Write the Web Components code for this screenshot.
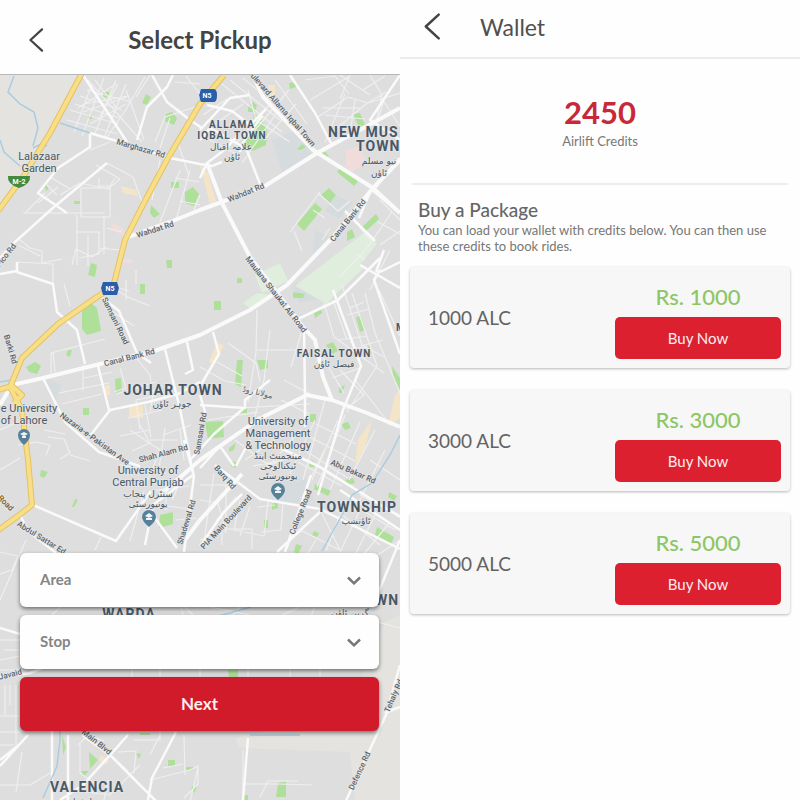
<!DOCTYPE html>
<html lang="en">
<head>
<meta charset="utf-8">
<meta name="viewport" content="width=device-width, initial-scale=1">
<title>Airlift</title>
<style>
body{margin:0;font-family:Lato,"Liberation Sans",sans-serif;color:#5c5c5c;background:#fff}
</style>
</head>
<body>
<app-screens>
  <pickup-screen slot="left"></pickup-screen>
  <wallet-screen slot="right"></wallet-screen>
</app-screens>

<template id="t-screens">
<style>
:host{display:grid;grid-template-columns:minmax(0,1fr) minmax(0,1fr);min-height:100vh}
::slotted(*){min-width:0}
</style>
<slot name="left"></slot><slot name="right"></slot>
</template>

<template id="t-bar">
<style>
:host{display:block;background:#fefefe}
header{display:grid;grid-template-columns:40px 1fr 40px;align-items:center;box-sizing:border-box;height:75px;padding:6px 16px 0;border-bottom:1px solid #b4b6b8}
h1{margin:0;text-align:center;font-size:24px;line-height:30px;font-weight:700;color:#434343}
button{display:grid;place-items:center;width:40px;height:40px;padding:0;border:0;background:none;color:#444;cursor:pointer}
svg{width:18px;height:26px}
:host([compact]) header{grid-template-columns:64px 1fr;height:59px;padding:0 16px 4px;border-bottom:2px solid #ececec}
:host([compact]) h1{text-align:left;font-size:23px;font-weight:400;color:#505050}
:host([compact]) button{width:32px}
:host([compact]) svg{width:20px;height:29px}
</style>
<header>
<button type="button" aria-label="Back"><svg viewBox="0 0 18 28" fill="none" stroke="currentColor" stroke-width="2.400"><path d="M15.500 2.500L3 14L15.500 25.500" stroke-linecap="round" stroke-linejoin="round"/></svg></button>
<h1><slot></slot></h1>
</header>
</template>

<template id="t-button">
<style>
:host{display:block}
button{display:block;box-sizing:border-box;width:100%;height:42px;border:0;border-radius:5px;background:#dc2030;color:#fdeeee;font:400 15px/20px Lato,"Liberation Sans",sans-serif;cursor:pointer}
:host([large]) button{height:54px;border-radius:6px;background:#d11a2a;font-size:17px;font-weight:700;box-shadow:0 2px 4px rgba(0,0,0,.5)}
</style>
<button type="button"><slot></slot></button>
</template>

<template id="t-select">
<style>
:host{display:grid;align-items:center;height:54px;background:#fefefe;border-radius:6px;box-shadow:0 2px 4px rgba(0,0,0,.5)}
select,svg{grid-area:1/1}
select{appearance:none;width:100%;height:54px;margin:0;padding:0 56px 2px 20px;border:0;border-radius:6px;background:none;color:#858585;font:700 15px/20px Lato,"Liberation Sans",sans-serif}
svg{justify-self:end;width:14px;height:9px;margin-right:18px;pointer-events:none}
</style>
<select><option></option></select>
<svg viewBox="0 0 14 9" fill="none" stroke="#777" stroke-width="2.500"><path d="M1 1.500L7 7.300L13 1.500"/></svg>
</template>

<template id="t-pickup">
<style>
:host{display:flex;flex-direction:column}
main{flex:1;display:grid;position:relative}
city-map{position:absolute;inset:0}
form{position:relative;align-self:end;display:grid;gap:8px;padding:0 21px 69px 20px}
</style>
<title-bar>Select Pickup</title-bar>
<main>
<city-map></city-map>
<form>
<select-field label="Area"></select-field>
<select-field label="Stop"></select-field>
<action-button large>Next</action-button>
</form>
</main>
</template>

<template id="t-wallet">
<style>
:host{display:block;background:#fefefe}
.balance{display:flex;flex-direction:column;align-items:center;margin:0 12px;padding:33px 0;border-bottom:2px solid #ededed}
.balance strong{font-size:31px;line-height:40px;font-weight:700;color:#c7283a}
.balance span{font-size:13px;line-height:18px;color:#777}
.intro{padding:13px 18px 13px}
h2{margin:0;font-size:19px;line-height:24px;font-weight:500;color:#666}
p{margin:0;font-size:13px;line-height:16px;color:#777}
.list{display:grid;gap:22px;padding:0 10px}
</style>
<title-bar compact>Wallet</title-bar>
<main>
<section class="balance"><strong>2450</strong><span>Airlift Credits</span></section>
<section class="intro"><h2>Buy a Package</h2><p>You can load your wallet with credits below. You can then use these credits to book rides.</p></section>
<section class="list">
<package-card><span slot="name">1000 ALC</span><span slot="price">Rs. 1000</span></package-card>
<package-card><span slot="name">3000 ALC</span><span slot="price">Rs. 3000</span></package-card>
<package-card><span slot="name">5000 ALC</span><span slot="price">Rs. 5000</span></package-card>
</section>
</main>
</template>

<template id="t-card">
<style>
:host{display:grid;grid-template-columns:1fr 166px;align-items:center;padding:15px 9px 9px 18px;background:#f7f7f7;border-radius:4px;box-shadow:0 1px 3px rgba(0,0,0,.28)}
.name{margin-bottom:6px;font-size:19px;line-height:24px;color:#636363}
.price{margin-bottom:6px;text-align:center;font-size:22px;line-height:29px;font-weight:500;color:#8cc665}
</style>
<div class="name"><slot name="name"></slot></div>
<div><div class="price"><slot name="price"></slot></div><action-button>Buy Now</action-button></div>
</template>

<template id="t-map">
<style>
:host{display:block;overflow:hidden;background:#dedede}
svg{display:block;width:100%;height:100%}
.w{fill:none;stroke:#fafafa;stroke-linejoin:round}
.a{stroke-width:4}.b{stroke-width:2.500}.c{stroke-width:1.200;stroke:#efefef}
.g{fill:#aee09a}.pale{fill:#e0eedd}.sand{fill:#f5e5c8}.pink{fill:#f0dcda}.mist{fill:#d6dbde}
.river{fill:none;stroke:#a9cde0;stroke-width:1.500}
.edge{fill:none;stroke:#e3c263;stroke-width:6;stroke-linejoin:round}.hwy{fill:none;stroke:#f9de88;stroke-width:4;stroke-linejoin:round}
text{font-family:Roboto,"DejaVu Sans",sans-serif;font-size:11px;fill:#4a5866;stroke:#e8e8e8;stroke-width:2px;stroke-opacity:.6;paint-order:stroke;text-anchor:middle}
.t{font-size:14px;font-weight:700;letter-spacing:1px}
.m{font-size:10px}
.left{text-anchor:start}
.r{font-size:8px;font-weight:500;fill:#59636c}
.u{font-family:"DejaVu Sans",sans-serif;font-size:9px}
.s{fill:#fff;stroke:none;font-size:7px;font-weight:700}
</style>
<svg viewBox="0 75 400 725" preserveAspectRatio="xMidYMin slice" role="img" aria-label="Map of Lahore">
<path fill="#e4e3df" d="M0 75H82L50 133L23 177L0 210Z"/>
<path fill="#e4e3df" d="M400 615L385 622L368 660L345 715L235 738L240 748L350 752L355 800H400Z"/>
<path class="mist" d="M272 140l24 -10 16 24 -30 18zM335 195l18 8 -14 16 -14 -8zM272 480l34-2 8 22-32 6zM315 230l14 6-16 18zM293 285l26 -8 4 20-24 6zM40 375l22 10-8 18z"/>
<g class="pale"><path d="M365 232l12 12 -50 60 -32 -18zM320 287l18-27 28 6 -30 28zM255 275l25 -12 8 18 -26 12zM243 303l14-10 14 2 -20 14z"/></g>
<g class="sand"><path d="M121 186l15 4 2 6-15-3zM268 85l7 0v12h-5zM200 165l8 8 8 28-6 3zM217 342l7 4-10 18-5-2zM129 406h14v12h-14zM395 395l5-5v28l-12 8zM372 420l-14 20-3 26 10-18zM105 385h5v10h-5zM101 755l8 6-3 4-7-5z"/></g>
<g class="pink"><path d="M111 222l12 6 2 8-13-6zM346 150l14-4 6 16-14 10-6-5zM122 259h10v4h-10z"/></g>
<path class="g" d="M253 113q10 6 14 18l-1 14-13 6-8-1-4-8 14-12zM248 108l5-6 4 3-2 7-7 0zM340 168l18 13-4 5-17-14zM321 195l8-7 7 7-7 9zM315 203l7 6-18 22-7-7zM376 214l3 5-14 13-3-5zM347 232l5-3 3 8-8 4zM146 94l5 3-4 8-5-2zM166 114l6-2 5 6-3 7-9-4zM185 192l8-5 6 7-5 12-9-3zM151 205l9 9-6 4-4-5zM171 182h8v6h-8zM289 83l7-1v5l-6 2zM302 144l4 3-5 3-4-1zM321 153l5-1 3 5-7-1zM353 114l7-1 5 12-6 2zM103 92h6v5h-6zM88 115h4v4h-4zM44 184l5 4-3 3zM74 201h6v3h-6zM82 307l9-4 6 5 4 23-14 4-5-6zM91 263l6 2-2 12-7-2zM140 284h5v10h-5zM166 260h6v8h-5zM26 367l9-5 6 4-4 8-8-2zM68 350l4 0-2 7-4-2zM115 379l6-1 1 13-6 2zM83 408h6v7h-6zM214 301h7v9h-7zM237 278h5v5h-5zM237 360h6l-2 27-6-3zM257 360l11 0v8l-8 2zM293 292l12 2-2 4-10 0zM314 313l7-4 1 4-7 5zM356 317l5-1 4 14-5 2zM326 345l7-3 5 9-6 3zM339 388l6-3-3 8-3 0zM205 422l18-1 1 16-16 2zM240 408h7v5h-7zM310 414l6 0v8h-6zM341 424l7-2 3 6-6 2zM315 484l16 7-3 5-14-7zM309 463l5-2 1 6-5 0zM377 527l17 10-3 7-16-9zM296 544l6 2-4 8-4-2zM314 531l5 2-2 4-5-2zM264 520h4v8h-4zM272 504l6-3 0 7-6 2zM229 448l7-5-2 7-5 2zM232 461l6 2-3 5-4-2zM41 470l7 2-4 6-4-2zM75 499l3 1-4 7-2 0zM160 515l13-3v12l-14 4zM389 492l8 4-3 5-6-4zM345 480l8-2 2 5-8 2zM168 760h7v6h-7zM89 752l9 8-8 9zM136 753l5 1-2 5zM186 767h7v3h-7zM278 783l8-2v16h-10zM228 670h10v7h-9zM62 735l4 12-3 8zM81 771h8l-5 5zM192 786l5 1-3 6-3-2zM242 795h6v5h-6zM140 733h10v2h-10zM392 366l8 12v12l-7-14zM367 345l3 1 3 8-3-1z"/>
<g class="w c">
<path d="M62 114l18-38M88 80l54 62M95 80l22 28M70 110l48 14M67 120l50 14M78 108l38-24M80 96l42 14M75 104l44 14M92 84l-18 48M104 78l-22 58M116 80l-22 56M126 84l-22 54M87 90l44 12M84 104l44-8M90 124l36-20M83 112l44-15M98 120l20-36M145 77l-20 34-18 26M126 90l18 50M150 75l-14 22"/>
<path d="M90 150l20-8M96 165l24 14-12 10-28-6-20 12M107 163l26 14 10 28M99 178v8l11 0v31H81V188M81 188h30M115 178l-6 10M25 213l20-20M23 213H105M50 177l20 12M47 185l10 10M38 203l20-16M77 215v50M77 232l22 0 0 22-20 4M104 216v38M88 236v30M107 228l14 4M99 248l20 2M20 240l10 8 12 3 0 12 20-4M18 245l22 11"/>
<path d="M160 160l-8 40M180 170l-20 52M177 140l12 36M155 142l10-25 30-10M170 118l-10 30M190 170l-14 50M175 178l24 4M200 205l-20-4M192 215l8-20M200 84l-25-2M186 76l14 18"/>
<path d="M203 115l24-16M215 124l28-20M222 84l60 48M230 80l50 40M243 78l48 40M210 140l30 16M235 145l36-42M248 90l8 30 34 22M275 80l32 44M282 105l-40 58M289 90l-34 40M296 104l-32 36M305 80l30-4 14 18M310 100l40-24M318 117l30-20 20 6 32-10M330 134l36-30 20-12M325 115l40 4M322 108l38 0M370 75l12 20-6 28M385 76l-22 14M380 96l20 30M340 75l30 20M345 94l-20 48M355 100l-6 40M384 100l-8 26M350 75l-10 24"/>
<path d="M290 232l30-40M302 251l-8-20M325 218l-12-8M318 193l20 18 12-10M330 228l-8 12M350 215l20 25M380 200l20 20M378 222l22 12M365 260l-8-6M392 212l-25 36-28 30M380 245l20-14M390 250l-20 40"/>
<path d="M72 265l4-16 16 8 14-10M64 284l6 22M53 284l0-20-36 -2M117 287l12 4M126 280v20M136 270v14M116 290l14 8 20 8M51 353l54-14M51 353v22M53 352l2 20M83 365v26M84 378l28-6M59 393l50-10M62 404l40-10M110 310l24 16M134 355l16 20 3 20M120 368l6 20-12 4M116 394l40-12M140 430l-4-30 20-4M145 405l6 32M128 418l34-8M120 436l30-6M150 412l4-22M163 435l28-10"/>
<path d="M257 310l-1 42-8 50M228 343l28 20 4 18M217 362l25 14M200 367l25 14 21 4M270 330l-6 50M257 350h50M265 376l-10 40M284 380l26 14M303 327l-12 40M324 303l10 34 50 36M333 300l14 40M342 285l20 60 22 12M350 308l14-6M338 340l30-4M347 315l22-6M314 343l30 50M338 350l30-3M361 346l22-6M340 370l24 25-18 14M355 380l30 38M365 293l10 40 25 60M379 290l21 46M332 378l28-10M352 293l25 73M377 366l-30 46M281 400l28 14M240 408l70-4M208 420l50-8"/>
<path d="M18 445l18-3 14 3-4 10M48 437l16 2 6 14-10 6M44 430l22 4M0 430l18-8M70 455l20 6M0 470l20 -12M110 450l18 16M130 430l30 20-12 30M140 425l10 18-18 8M150 440h28M165 428l-6 40M180 430l4 30M120 465l46 8M156 490l34-4M166 480v30M160 505l30 4M172 500l14-30M176 520l20-2M95 550l6-13M130 541l14-50"/>
<path d="M200 485l30 0M200 500l18 3 8 30M214 473l-10 68M226 478v50M236 497l-20 24M240 500l-6 30 30 6 4 -34M250 506l-10 30M222 545v-16h30v20M200 540l22-12M275 505l-18 2M283 502l-2 28-20 2M260 470l30-14M253 466l30-6M275 440l-30 20M235 440l40 30M300 430l-30 35M315 420l-28 60M325 400l-22 80M310 437l45 24M316 424l40 20M304 450l44 28M298 462l44 24M345 415l-28 72M360 422l-30 68M375 430l-26 50M385 450l-30 60M322 470l40 24M331 437l-24 48M338 420l-26 60M370 460l30 20M360 495l40 20M345 500l50 30M330 505l50 40M320 510l20 40M340 515l-14 36M300 530l40 20M305 510l-20 42M360 510l-20 42M375 515l-20 40M390 522l-26 32M400 540l-30 20M316 540l-10 16"/>
<path d="M0 552l18 4 -6 14-12 4M26 540l-26 60M0 640h20M4 650h16M0 660l20-4M5 685v30M16 685v60M0 716h22M0 732h20M0 745h14M10 685v20M22 670h-22"/>
<path d="M78 745l10-10 16 6M80 745v28l20 14M118 752l18-1-2 22M134 740h26v-10M184 735l1 40M150 780l40-10 8-4v18l-14 14M163 768l20-4M242 784h36l34 1M260 797l8-16h30M243 750v48M198 768l-8 34M120 745l-22 24M70 790l40 5M140 765l-30 30M0 785h30l20-12M22 752l-6 40M104 800l4-20M100 745l28 26M160 735l-10 20"/>
<path d="M60 607l-8 8M180 605l4 12M210 607l40 8M240 607l-12 14M300 607l-26 12M315 605l-4 12M185 607l10 10M132 669v8M160 669v8M200 669v8M248 669v8M290 669v8M320 669v8M370 620l30 8"/>
</g>
<g class="w b">
<path d="M90 133v14L58 168 38 193 67 213M90 133l30 9 50 16 30 6 12 2 10-4M137 140l10-33 20-20 6-12M152 75l15 27 23 18 12 8M83 75l44 67M107 163L54 207 15 242 0 258"/>
<path d="M0 274l17-3v-9M17 272l36 12 4 28 20 18 8 34M98 366l11 44M165 349l15 60 13 64M43 378l22 44 34 30 40 14 0 4M90 436l20-26 38-8M148 402l30-8 22-12M187 342l6 28-8 4M99 295l20 16 18 42 14 10"/>
<path d="M240 152l2 -8 20 -28M246 148l14 36M200 140l10-12 35 20M200 178l7-15 16-12 15-15M207 105l25 6 18 14 16-16M200 130l30-32 20-3"/>
<path d="M290 75l25 38 17 32M400 75l-30 45 30 20M345 211l30 30M372 190l28 23M371 190l-12 28M375 188l25-30M380 258l-20 20-22 22-42 20M360 265l40 23M380 270l-6 10 26 74M384 250l-8 22M400 262l-20 10"/>
<path d="M333 290l20 54 8 22-18 44-25 85M304 327l1 70v30M200 405l45 3 0 0 0-8 25-20M200 395l6 20M213 332l6 22-20 34M244 408l-30 26-24 26"/>
<path d="M33 505l83 36 35-50M193 475l-40 30-8 40M149 510l28 38M184 440l10 36-10 76M200 468l20-22 14 20M215 465l45 34 60 10 60 30 20 10M270 443l50 24 80 50M322 510l-45 42M311 475l-26 77M236 466l14-26M242 494l-18 18-24 34M340 490l60 40M20 515l8 16 28 22"/>
<path d="M0 628l20 6M0 677l30-4 20-8M52 730l0 70M68 735v65M128 735L83 785 60 800M28 735L0 766M82 735l28 20 50 50M176 732l-24 46-4 22M248 738l-5 62M112 757l30 30M0 760l20-16M400 540l-28 68M400 665l-14 50-42 90M385 713l15-6"/>
</g>
<g class="w a">
<path d="M0 405l12-20 31-7 57-14 57-14 43-15 50-25 37-25 46-48 40-49 27-28"/>
<path d="M128 237l42-15 30-12 65-24 52-33 52-28 31-17M253 75l10 22 50 53 60 38 27 25M207 163l15 40 28 54 53 70 12 13 8 37 9 23 35 13 33 14"/>
<path d="M332 400l-25-5-48 24-59 41-40 35M185 540l15-20 42-46"/>
</g>
<path class="river" d="M14 76l-6 16 12 12 14 8 4 16-5 18M0 140l4 12 16 14M33 148l8-4 6 2M60 123l30 10M400 435l-10 20-18 28-20 12-10 20-20 36M60 680v60l-3 26-14 32M215 617l36-10M250 735l50 0M0 382l12-2"/>
<path class="edge" d="M224 75L200 104 168 158 147 197 125 240 113 287 97 297 58 324 22 358 10 387 22 410 28 460 32 505 18 516-3 531M82 73L50 133 23 177-2 211M-2 390l14-4 10 9-8 8"/>
<path class="hwy" d="M224 75L200 104 168 158 147 197 125 240 113 287 97 297 58 324 22 358 10 387 22 410 28 460 32 505 18 516-3 531M82 73L50 133 23 177-2 211M-2 390l14-4 10 9-8 8"/>
<path fill="#2b5eaa" d="M201 89h13q3 0 3 6.500t-3 6.500h-13q-3-6 0-13zM199 95l3-6h11l4 6-4 7h-11zM103 282h14l2 6-2 7h-14l-2-7z"/>
<path fill="#43893e" d="M8 176h22q1 8-11 12q-12-4-11-12z"/>
<text class="s" x="207" y="98">N5</text><text class="s" x="110" y="291">N5</text><text class="s" x="19" y="184">M-2</text>
<path fill="#56819a" d="M24 445q-6-5-6-10a6 6 0 0 1 12 0q0 5-6 10zM149 527q-7-6-7-10a7 7 0 0 1 14 0q0 4-7 10zM278 500q-7-6-7-10a7 7 0 0 1 14 0q0 4-7 10z"/>
<path fill="#f0f4f6" d="M20 434l4-2 4 2-4 2zM22 436h4v2h-4zM145 516l4-3 4 3-4 2zM146 518h6v2h-6zM274 489l4-3 4 3-4 2zM275 491h6v2h-6z"/>
<text x="39" y="160">Lalazaar</text><text x="39" y="172">Garden</text>
<text class="t m" x="232" y="128">ALLAMA</text><text class="t m" x="232" y="139">IQBAL TOWN</text><text class="u" x="231" y="150">علامہ اقبال</text><text class="u" x="232" y="160">ٹاؤن</text>
<text class="t left" x="328" y="137">NEW MUS</text><text class="t left" x="356" y="151">TOWN</text><text class="u" x="379" y="164">نیو مسلم</text><text class="u" x="379" y="176">ٹاؤن</text>
<text class="t m" x="334" y="357">FAISAL TOWN</text><text class="u" x="334" y="367">فیصل ٹاؤن</text>
<text class="t" x="173" y="395">JOHAR TOWN</text><text class="u" x="172" y="407">جوہر ٹاؤن</text>
<text x="29" y="412">e University</text><text x="24" y="424">of Lahore</text>
<text x="278" y="425">University of</text><text x="278" y="437">Management</text><text x="278" y="449">&amp; Technology</text><text class="u" x="278" y="459">مینجمنٹ اینڈ</text><text class="u" x="278" y="469">ٹیکنالوجی</text><text class="u" x="278" y="479">یونیورسٹی</text>
<text x="148" y="474">University of</text><text x="148" y="486">Central Punjab</text><text class="u" x="148" y="497">سنٹرل پنجاب</text><text class="u" x="148" y="507">یونیورسٹی</text>
<text class="t" x="357" y="512">TOWNSHIP</text><text class="u" x="356" y="524">ٹاؤنشپ</text>
<text class="t" x="129" y="619">WARDA</text><text class="t left" x="375" y="605">WN</text><text class="u" x="350" y="616">گرین ٹاؤن</text>
<text class="t" x="87" y="792">VALENCIA</text><text class="u" x="86" y="805">ویلنشیا</text>
<text class="t m left" x="396" y="331">M</text>
<g>
<text class="r" transform="translate(140 151) rotate(16)">Marghazar Rd</text>
<text class="r" transform="translate(156 232) rotate(-18)">Wahdat Rd</text>
<text class="r" transform="translate(247 195) rotate(-22)">Wahdat Rd</text>
<text class="r" transform="translate(278 108) rotate(49)">Boulevard Allama Iqbal Town</text>
<text class="r" transform="translate(350 222) rotate(-51)">Canal Bank Rd</text>
<text class="r" transform="translate(274 296) rotate(52)">Maulana Shaukat Ali Road</text>
<text class="r" transform="translate(113 322) rotate(64)">Samsani Road</text>
<text class="r" transform="translate(130 360) rotate(-14)">Canal Bank Rd</text>
<text class="r" transform="translate(93 441) rotate(36)">Nazaria-e-Pakistan Ave</text>
<text class="r" transform="translate(164 456) rotate(-15)">Shah Alam Rd</text>
<text class="r" transform="translate(203 434) rotate(-80)">Samsani Rd</text>
<text class="r" transform="translate(8 257) rotate(-52)">Pico Rd</text>
<text class="r" transform="translate(8 350) rotate(74)">Barki Rd</text>
<text class="r" transform="translate(223 479) rotate(49)">Barq Rd</text>
<text class="r" transform="translate(228 524) rotate(-47)">PIA Main Boulevard</text>
<text class="r" transform="translate(189 523) rotate(-73)">Shadewal Rd</text>
<text class="r" transform="translate(303 513) rotate(-68)">College Road</text>
<text class="r" transform="translate(352 474) rotate(24)">Abu Bakar Rd</text>
<text class="r" transform="translate(40 540) rotate(32)">Abdul Sattar Ed</text>
<text class="r m" style="fill:#795817" transform="translate(4 505) rotate(45)">Road</text>
<text class="r" transform="translate(257 395) rotate(14)">مولانا روڈ</text>
<text class="r" transform="translate(11 677) rotate(-14)">Javaid</text>
<text class="r" transform="translate(95 744) rotate(39)">Main Blvd</text>
<text class="r" transform="translate(362 772) rotate(-65)">Defence Rd</text>
<text class="r" transform="translate(396 697) rotate(-66)">Tehaly Rd</text>
</g>
</svg>
</template>

<script>
function define(name, templateId, setup) {
  customElements.define(name, class extends HTMLElement {
    constructor() {
      super();
      const root = this.attachShadow({ mode: "open" });
      root.append(document.getElementById(templateId).content.cloneNode(true));
    }
    connectedCallback() { if (setup) setup(this, this.shadowRoot); }
  });
}
define("title-bar", "t-bar");
define("action-button", "t-button");
define("select-field", "t-select", (el, root) => {
  const label = el.getAttribute("label");
  root.querySelector("select").setAttribute("aria-label", label);
  root.querySelector("option").textContent = label;
});
define("package-card", "t-card");
define("city-map", "t-map");
define("pickup-screen", "t-pickup");
define("wallet-screen", "t-wallet");
define("app-screens", "t-screens");
</script>
</body>
</html>
